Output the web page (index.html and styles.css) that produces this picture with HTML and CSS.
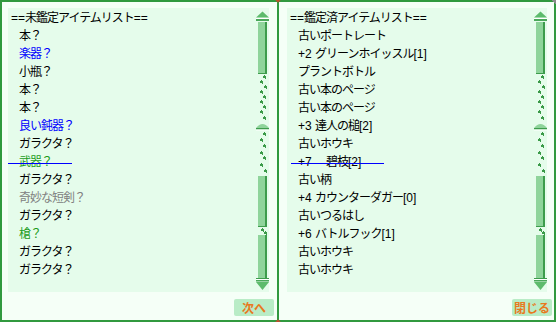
FILE: index.html
```html
<!DOCTYPE html>
<html lang="ja">
<head>
    <meta charset="UTF-8">
    <title>アイテム鑑定</title>
    <link rel="stylesheet" href="styles.css">
</head>
<body>
    <div class="window">
        <section class="pane pane-left">
            <div class="listbox">
                <ul class="items">
                    <li class="title"><span class="lat">==</span>未鑑定アイテムリスト<span class="lat">==</span></li>
                    <li>本？</li>
                    <li class="blue">楽器？</li>
                    <li>小瓶？</li>
                    <li>本？</li>
                    <li>本？</li>
                    <li class="blue">良い鈍器？</li>
                    <li>ガラクタ？</li>
                    <li class="green struck struck-left">武器？</li>
                    <li>ガラクタ？</li>
                    <li class="gray">奇妙な短剣？</li>
                    <li>ガラクタ？</li>
                    <li class="green">槍？</li>
                    <li>ガラクタ？</li>
                    <li>ガラクタ？</li>
                </ul>
                <svg class="scroll" width="14" height="284" viewBox="0 0 14 284">
                    <defs>
                        <g id="paw" fill="#3a9a48">
                            <rect x="1" y="0" width="1" height="1"/>
                            <rect x="0" y="1" width="3" height="2"/>
                            <rect x="2" y="3" width="1" height="1"/>
                        </g>
                    </defs>
                    <polygon points="1,9.5 7.5,3.5 14,9.5" fill="#5dbb6c"/>
                    <rect x="1" y="10" width="13" height="1" fill="#ffffff"/>
                    <rect x="1" y="11" width="13" height="2" fill="#4aa85a"/>
                    <rect x="3" y="14" width="9" height="52" fill="#8fd49b"/>
                    <rect x="10" y="14" width="2" height="52" fill="#3d9c4c"/>
                    <rect x="3" y="65" width="9" height="1" fill="#3d9c4c"/>
                    <use href="#paw" x="8" y="67"/>
                    <use href="#paw" x="5" y="72"/>
                    <use href="#paw" x="9" y="77"/>
                    <use href="#paw" x="5" y="82"/>
                    <use href="#paw" x="8" y="87"/>
                    <use href="#paw" x="5" y="92"/>
                    <use href="#paw" x="8" y="97"/>
                    <use href="#paw" x="5" y="102"/>
                    <use href="#paw" x="8" y="108"/>
                    <path d="M1,120 Q7.5,112 14,120 Z" fill="#8fd49b"/>
                    <rect x="1" y="120" width="13" height="1.5" fill="#3d9c4c"/>
                    <rect x="1" y="121.5" width="13" height="1" fill="#ffffff"/>
                    <use href="#paw" x="8" y="124"/>
                    <use href="#paw" x="5" y="130"/>
                    <use href="#paw" x="8" y="136"/>
                    <use href="#paw" x="5" y="143"/>
                    <use href="#paw" x="8" y="148"/>
                    <use href="#paw" x="5" y="155"/>
                    <use href="#paw" x="9" y="161"/>
                    <rect x="3" y="168" width="9" height="51" fill="#8fd49b"/>
                    <rect x="10" y="168" width="2" height="51" fill="#3d9c4c"/>
                    <rect x="3" y="218" width="9" height="1" fill="#3d9c4c"/>
                    <use href="#paw" x="6" y="220"/>
                    <use href="#paw" x="9" y="223"/>
                    <rect x="3" y="227" width="9" height="43" fill="#8fd49b"/>
                    <rect x="10" y="227" width="2" height="43" fill="#3d9c4c"/>
                    <rect x="1" y="270" width="13" height="1" fill="#3d9c4c"/>
                    <rect x="1" y="271" width="13" height="1" fill="#ffffff"/>
                    <rect x="1" y="272" width="13" height="1.5" fill="#4aa85a"/>
                    <polygon points="1,274 14,274 7.5,282" fill="#5dbb6c"/>
                </svg>
            </div>
            <div class="actions">
                <button class="btn" type="button">次へ</button>
            </div>
        </section>
        <section class="pane pane-right">
            <div class="listbox">
                <ul class="items">
                    <li class="title"><span class="lat">==</span>鑑定済アイテムリスト<span class="lat">==</span></li>
                    <li>古いポートレート</li>
                    <li><span class="lat">+2 </span>グリーンホイッスル<span class="lat">[1]</span></li>
                    <li>プラントボトル</li>
                    <li>古い本のページ</li>
                    <li>古い本のページ</li>
                    <li><span class="lat">+3 </span>達人の槌<span class="lat">[2]</span></li>
                    <li>古いホウキ</li>
                    <li class="struck struck-right"><span class="lat">+7 </span>　碧枝<span class="lat">[2]</span></li>
                    <li>古い柄</li>
                    <li><span class="lat">+4 </span>カウンターダガー<span class="lat">[0]</span></li>
                    <li>古いつるはし</li>
                    <li><span class="lat">+6 </span>バトルフック<span class="lat">[1]</span></li>
                    <li>古いホウキ</li>
                    <li>古いホウキ</li>
                </ul>
                <svg class="scroll" width="14" height="284" viewBox="0 0 14 284">
                    <polygon points="1,9.5 7.5,3.5 14,9.5" fill="#5dbb6c"/>
                    <rect x="1" y="10" width="13" height="1" fill="#ffffff"/>
                    <rect x="1" y="11" width="13" height="2" fill="#4aa85a"/>
                    <rect x="3" y="14" width="9" height="52" fill="#8fd49b"/>
                    <rect x="10" y="14" width="2" height="52" fill="#3d9c4c"/>
                    <rect x="3" y="65" width="9" height="1" fill="#3d9c4c"/>
                    <use href="#paw" x="8" y="67"/>
                    <use href="#paw" x="5" y="72"/>
                    <use href="#paw" x="9" y="77"/>
                    <use href="#paw" x="5" y="82"/>
                    <use href="#paw" x="8" y="87"/>
                    <use href="#paw" x="5" y="92"/>
                    <use href="#paw" x="8" y="97"/>
                    <use href="#paw" x="5" y="102"/>
                    <use href="#paw" x="8" y="108"/>
                    <path d="M1,120 Q7.5,112 14,120 Z" fill="#8fd49b"/>
                    <rect x="1" y="120" width="13" height="1.5" fill="#3d9c4c"/>
                    <rect x="1" y="121.5" width="13" height="1" fill="#ffffff"/>
                    <use href="#paw" x="8" y="124"/>
                    <use href="#paw" x="5" y="130"/>
                    <use href="#paw" x="8" y="136"/>
                    <use href="#paw" x="5" y="143"/>
                    <use href="#paw" x="8" y="148"/>
                    <use href="#paw" x="5" y="155"/>
                    <use href="#paw" x="9" y="161"/>
                    <rect x="3" y="168" width="9" height="51" fill="#8fd49b"/>
                    <rect x="10" y="168" width="2" height="51" fill="#3d9c4c"/>
                    <rect x="3" y="218" width="9" height="1" fill="#3d9c4c"/>
                    <use href="#paw" x="6" y="220"/>
                    <use href="#paw" x="9" y="223"/>
                    <rect x="3" y="227" width="9" height="43" fill="#8fd49b"/>
                    <rect x="10" y="227" width="2" height="43" fill="#3d9c4c"/>
                    <rect x="1" y="270" width="13" height="1" fill="#3d9c4c"/>
                    <rect x="1" y="271" width="13" height="1" fill="#ffffff"/>
                    <rect x="1" y="272" width="13" height="1.5" fill="#4aa85a"/>
                    <polygon points="1,274 14,274 7.5,282" fill="#5dbb6c"/>
                </svg>
            </div>
            <div class="actions">
                <button class="btn" type="button">閉じる</button>
            </div>
        </section>
        <span class="gem gem-top"></span>
        <span class="gem gem-bottom"></span>
        <span class="corner"></span>
    </div>
</body>
</html>
```

FILE: styles.css
```css
body {
    margin: 0;
    font-family: "Liberation Sans", "Noto Sans CJK JP", sans-serif;
    font-size: 12px;
    background: #f5fff7;
}
.window {
    position: relative;
    width: 556px;
    height: 322px;
    box-sizing: border-box;
    border: 2px solid #31993f;
    display: flex;
    background: #f5fff7;
}
.pane {
    display: flex;
    flex-direction: column;
    padding-top: 6px;
}
.pane-left {
    width: 275px;
    padding-left: 6px;
    box-sizing: border-box;
}
.pane-right {
    flex: 1;
    border-left: 2px solid #31993f;
    padding-left: 8px;
}
.listbox {
    display: flex;
    width: 261px;
    height: 284px;
    background: #e5fceb;
}
.pane-right .listbox {
    width: 260px;
}
.items {
    flex: 1;
    list-style: none;
    margin: 0;
    padding: 1px 0 0 3px;
    color: #000;
}
.items li {
    height: 18px;
    line-height: 18px;
    padding-left: 8px;
    letter-spacing: -1px;
    white-space: nowrap;
}
.items li.title {
    padding-left: 0;
}
.lat {
    letter-spacing: 0;
}
.blue {
    color: #0000ff;
}
.green {
    color: #1c9c1c;
}
.gray {
    color: #808080;
}
.items li.struck {
    position: relative;
}
.struck::after {
    content: "";
    position: absolute;
    top: 10px;
    height: 1px;
    background: #0000ff;
}
.struck-left::after {
    left: -3px;
    width: 64px;
}
.struck-right::after {
    left: 1px;
    width: 93px;
}
.scroll {
    flex: none;
}
.actions {
    display: flex;
    justify-content: flex-end;
    margin-top: 7px;
    padding-right: 3px;
}
.pane-right .actions {
    padding-right: 2px;
}
.btn {
    width: 40px;
    height: 17px;
    padding: 0;
    border: none;
    border-radius: 2px;
    background: #b9ecc6;
    color: #e8791e;
    font-family: "Noto Sans CJK JP", sans-serif;
    font-size: 12px;
    font-weight: bold;
    line-height: 17px;
}
.gem {
    position: absolute;
    left: 274px;
    width: 4px;
    height: 4px;
    background: #b8532e;
    transform: rotate(45deg);
}
.gem-top {
    top: -4px;
}
.gem-bottom {
    bottom: -4px;
}
.corner {
    position: absolute;
    right: -2px;
    top: -2px;
    width: 4px;
    height: 4px;
    background: linear-gradient(45deg, transparent 50%, #8a8a8a 50%);
}
```
